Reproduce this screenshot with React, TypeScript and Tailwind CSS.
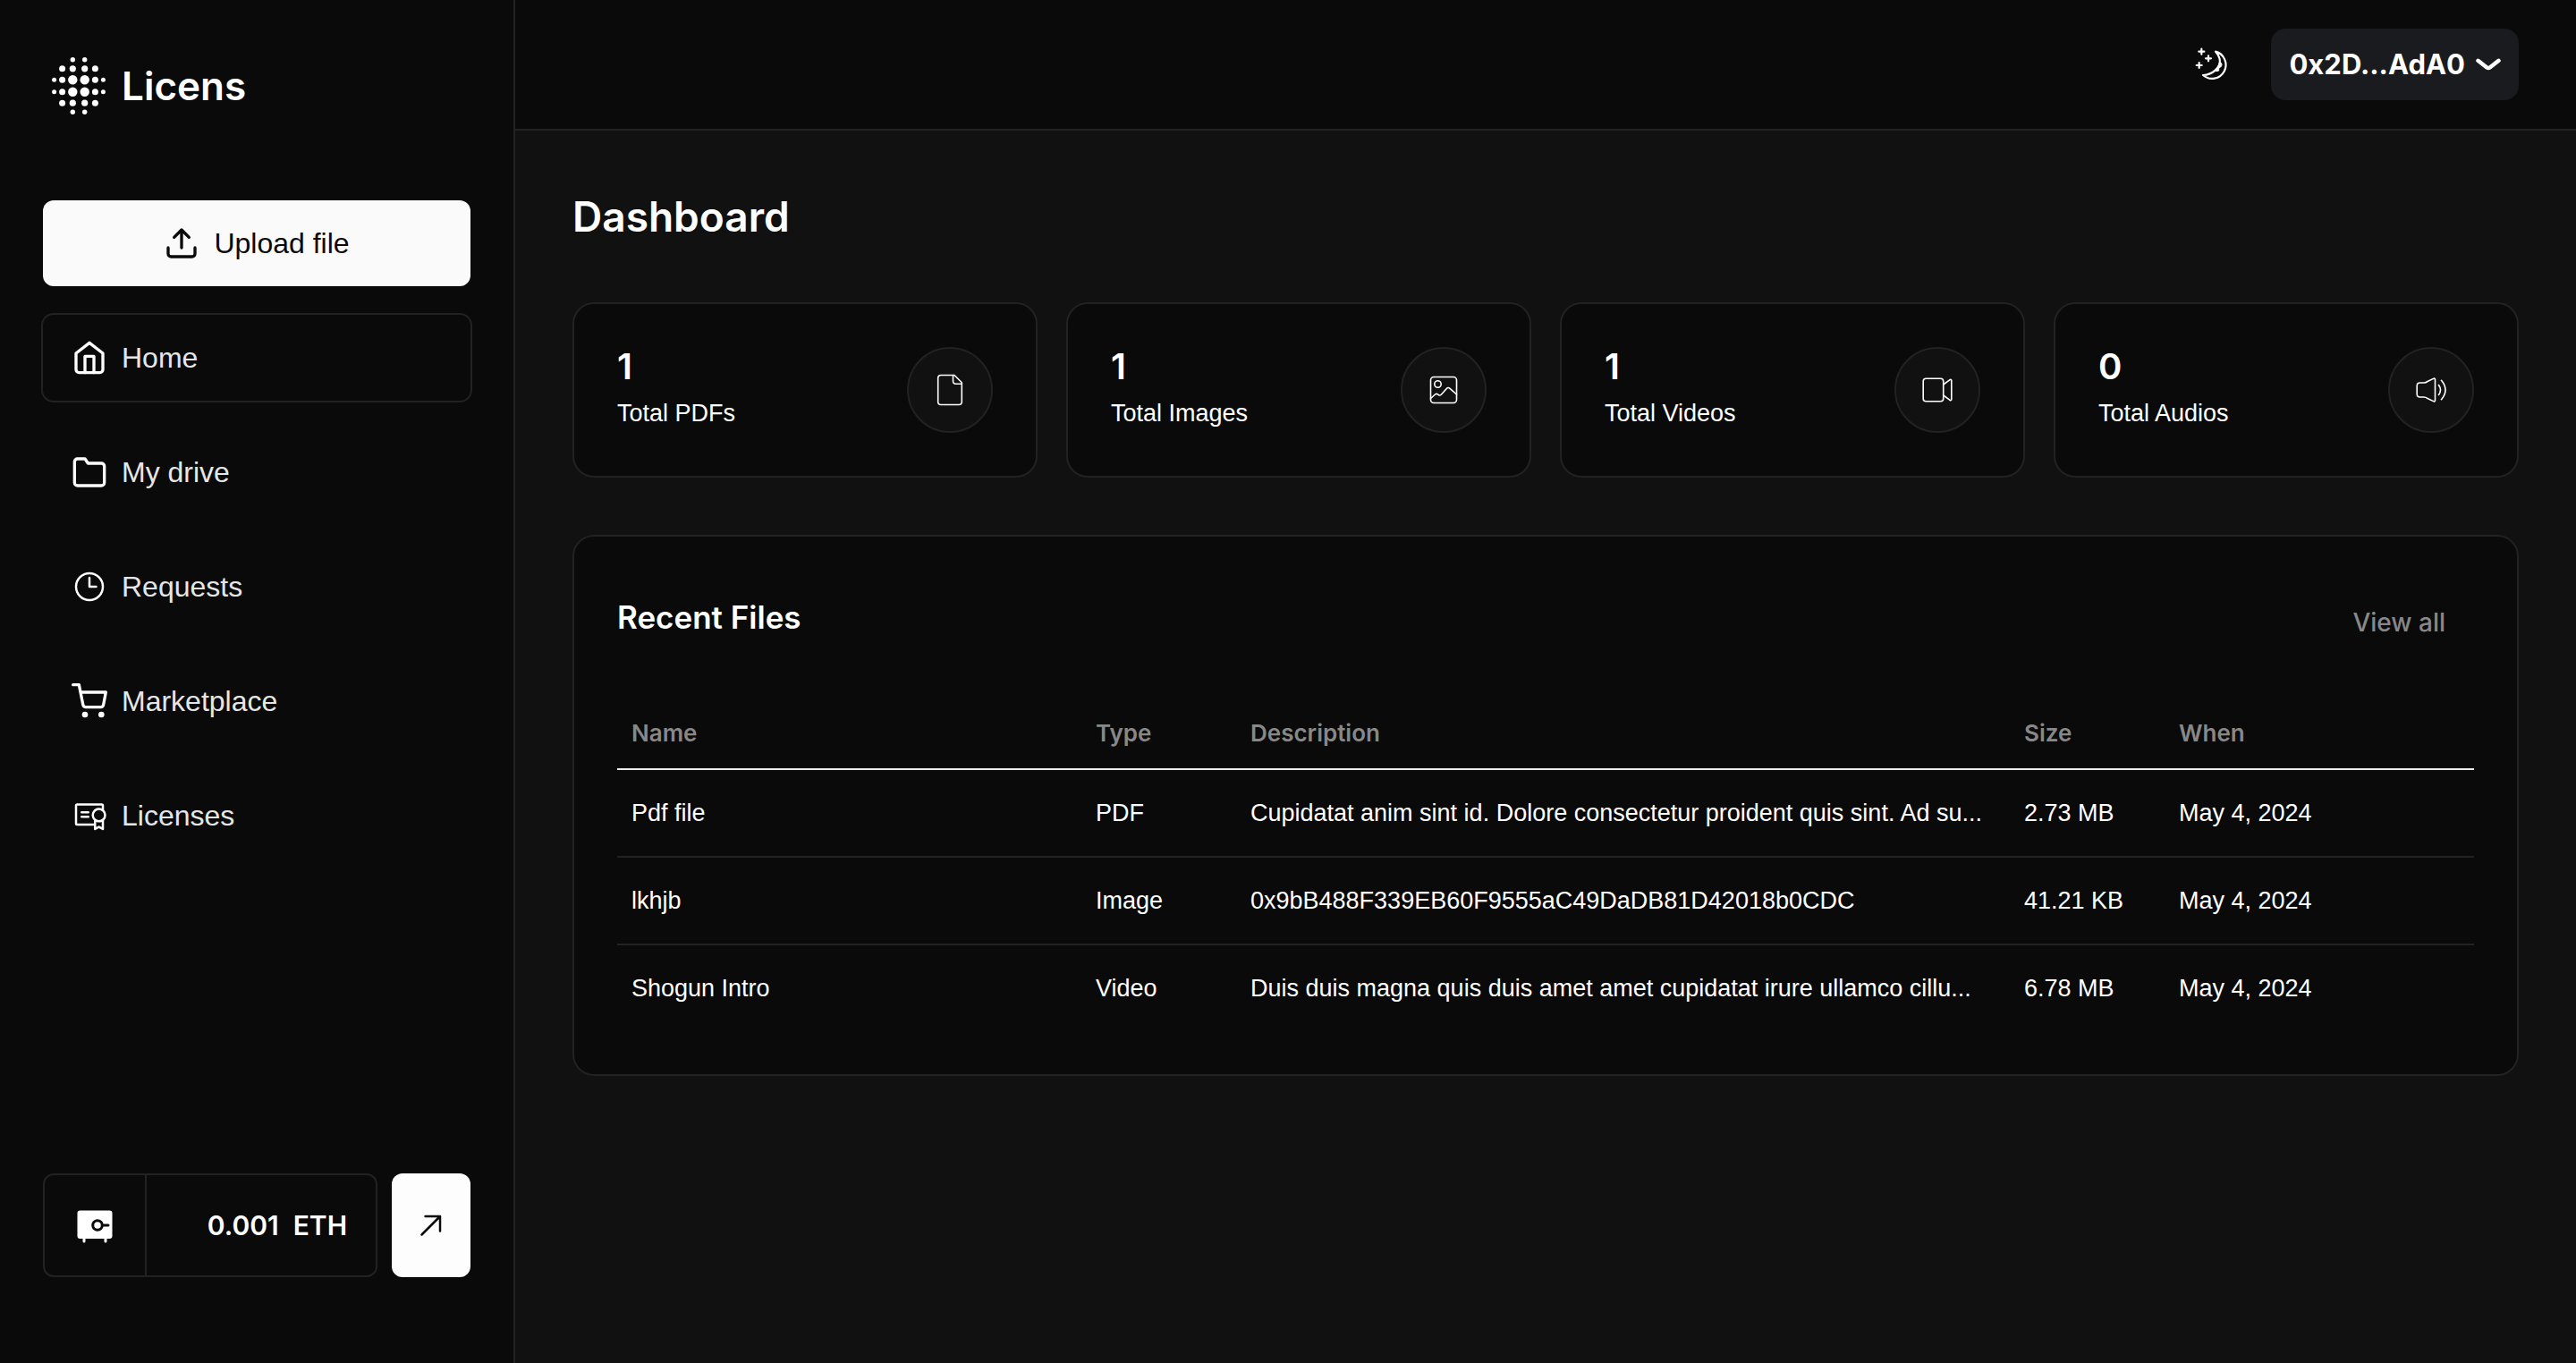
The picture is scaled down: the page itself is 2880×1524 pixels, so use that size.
import React, { type ReactNode } from "react";
import { PiCertificate, PiVaultFill } from "react-icons/pi";

const FeatherIcon = ({ children }: { children: ReactNode }) => (
  <svg
    viewBox="0 0 24 24"
    className="size-10 shrink-0"
    fill="none"
    stroke="currentColor"
    strokeWidth="2"
    strokeLinecap="round"
    strokeLinejoin="round"
    overflow="visible"
    aria-hidden="true"
  >
    {children}
  </svg>
);

const ThinIcon = ({ children }: { children: ReactNode }) => (
  <svg
    viewBox="0 0 40 40"
    className="size-10"
    fill="none"
    stroke="currentColor"
    strokeWidth="1.6"
    strokeLinecap="round"
    strokeLinejoin="round"
    aria-hidden="true"
  >
    {children}
  </svg>
);

const LOGO_DOTS: [number, number, number][] = [
  [6.7, 6.7, 5.2],
  [18.4, 6.7, 3.5],
  [27.4, 6.7, 2.5],
  [6.7, 19.2, 3.6],
  [18.4, 19.2, 3.5],
  [6.7, 29.2, 2.7],
];

const LogoMark = () => (
  <svg viewBox="-40 -32 80 64" className="h-16 w-20" fill="white" aria-hidden="true">
    {LOGO_DOTS.flatMap(([x, y, r]) =>
      [
        [1, 1],
        [1, -1],
        [-1, 1],
        [-1, -1],
      ].map(([sx, sy]) => <circle key={`${x}${y}${sx}${sy}`} cx={x * sx} cy={y * sy} r={r} />)
    )}
  </svg>
);

const MoonIcon = () => (
  <svg
    viewBox="0 -3 168 162"
    className="h-[54px] w-14"
    fill="none"
    stroke="white"
    strokeWidth="6.5"
    strokeLinecap="round"
    strokeLinejoin="round"
    aria-hidden="true"
  >
    <path d="M43 26v18M34 35h18M66 49v18M57 58h18M35 72v18M26 81h18" />
    <path d="M90 35A46 46 0 1 1 48 114C66 113 80 106 90 97C101 86 107 74 104 60C102 50 97 42 90 35Z" />
    <path fill="white" strokeWidth="3" d="M105 70C112 73 113 82 107 87L101 90L101 99L93 101L87 97L98 86Z" />
  </svg>
);

const NAV = [
  {
    label: "Home",
    active: true,
    icon: (
      <FeatherIcon>
        <path d="M3 9l9-7 9 7v11a2 2 0 0 1-2 2H5a2 2 0 0 1-2-2z" />
        <path d="M9 22V11h6v11" />
      </FeatherIcon>
    ),
  },
  {
    label: "My drive",
    icon: (
      <FeatherIcon>
        <path d="M22 19a2 2 0 0 1-2 2H4a2 2 0 0 1-2-2V5a2 2 0 0 1 2-2h5l2 3h9a2 2 0 0 1 2 2z" />
      </FeatherIcon>
    ),
  },
  {
    label: "Requests",
    icon: (
      <FeatherIcon>
        <path strokeWidth="1.5" d="M12 6v6h4.5m4.5 0a9 9 0 1 1-18 0 9 9 0 0 1 18 0Z" />
      </FeatherIcon>
    ),
  },
  {
    label: "Marketplace",
    icon: (
      <FeatherIcon>
        <circle cx="9" cy="21" r="1" />
        <circle cx="20" cy="21" r="1" />
        <path d="M1 1h4l2.68 13.39a2 2 0 0 0 2 1.61h9.72a2 2 0 0 0 2-1.61L23 6H6" />
      </FeatherIcon>
    ),
  },
  { label: "Licenses", icon: <PiCertificate className="size-10 shrink-0" aria-hidden="true" /> },
];

const STATS = [
  {
    value: 1,
    label: "Total PDFs",
    icon: (
      <ThinIcon>
        <path d="M25 3.5H10A3.3 3.3 0 0 0 6.7 6.8V33.2A3.3 3.3 0 0 0 10 36.5H30A3.3 3.3 0 0 0 33.3 33.2V11.8Z" />
        <path d="M23.5 3.5V10A3.3 3.3 0 0 0 26.8 13.3H33.3" />
      </ThinIcon>
    ),
  },
  {
    value: 1,
    label: "Total Images",
    icon: (
      <ThinIcon>
        <rect x="5.5" y="5.5" width="29" height="29" rx="3.5" />
        <circle cx="13.5" cy="13.5" r="3.7" />
        <path d="M5.5 29.5L10.5 25Q12 23.7 13.5 25L14.5 25.7Q16 26.5 17.5 25L23.3 18.5Q25 16.5 27 18.3L34.5 25" />
      </ThinIcon>
    ),
  },
  {
    value: 1,
    label: "Total Videos",
    icon: (
      <ThinIcon>
        <rect x="4.2" y="7.3" width="22.5" height="25.4" rx="3" />
        <path d="M26.7 14L33.7 8.8Q35.8 7.6 35.8 9.8V30.2Q35.8 32.4 33.7 31.2L26.7 26" />
      </ThinIcon>
    ),
  },
  {
    value: 0,
    label: "Total Audios",
    icon: (
      <ThinIcon>
        <path d="M4.2 15.5Q4.2 12 7.5 12H12Q14 12 16 10.5L22.5 7.4Q24.5 6.6 24.5 8.5V31.5Q24.5 33.4 22.5 32.6L16 29.5Q14 28 12 28H7.5Q4.2 28 4.2 24.5Z" />
        <path d="M28.5 14.5Q32.5 20 28.5 25.5M31.5 9.3Q40.5 20 31.5 30.7" />
      </ThinIcon>
    ),
  },
];

const FILES = [
  {
    name: "Pdf file",
    type: "PDF",
    description: "Cupidatat anim sint id. Dolore consectetur proident quis sint. Ad su...",
    size: "2.73 MB",
    when: "May 4, 2024",
  },
  {
    name: "lkhjb",
    type: "Image",
    description: "0x9bB488F339EB60F9555aC49DaDB81D42018b0CDC",
    size: "41.21 KB",
    when: "May 4, 2024",
  },
  {
    name: "Shogun Intro",
    type: "Video",
    description: "Duis duis magna quis duis amet amet cupidatat irure ullamco cillu...",
    size: "6.78 MB",
    when: "May 4, 2024",
  },
];

const COLUMNS = [
  { label: "Name", width: "w-3/12" },
  { label: "Type", width: "w-1/12" },
  { label: "Description", width: "w-5/12" },
  { label: "Size", width: "w-1/12" },
  { label: "When", width: "w-2/12" },
];

function Sidebar() {
  return (
    <aside className="flex w-[576px] shrink-0 flex-col border-r-2 border-[#222222] bg-[#0a0a0a] px-12 pt-16 pb-24">
      <a href="#" className="mb-24 flex items-center gap-2">
        <LogoMark />
        <span className="font-['Inter',sans-serif] text-[44px] leading-16 font-semibold">Licens</span>
      </a>
      <button
        type="button"
        className="mb-8 flex h-24 items-center justify-center gap-4 rounded-xl bg-[#fafafa] text-[32px] text-[#0a0a0a]"
      >
        <FeatherIcon>
          <path d="M21 15v4a2 2 0 0 1-2 2H5a2 2 0 0 1-2-2v-4M17 8l-5-5-5 5M12 3v12" />
        </FeatherIcon>
        Upload file
      </button>
      <nav className="flex flex-col gap-8">
        {NAV.map((item) => (
          <a
            key={item.label}
            href="#"
            aria-current={item.active ? "page" : undefined}
            className={
              item.active
                ? "flex h-24 items-center gap-4 rounded-xl px-8 ring-2 ring-[#222222]"
                : "flex h-24 items-center gap-4 rounded-xl px-8"
            }
          >
            {item.icon}
            <span className="text-[32px] text-[#e6e6e6]">{item.label}</span>
          </a>
        ))}
      </nav>
      <div className="mt-auto flex h-[116px] gap-4">
        <div className="flex flex-1 rounded-xl border-2 border-[#222222]">
          <div className="flex w-[114px] items-center justify-center border-r-2 border-[#222222]">
            <PiVaultFill className="size-12" aria-hidden="true" />
          </div>
          <div className="flex flex-1 items-center justify-end gap-4 pr-8 font-['Inter',sans-serif] text-[30px] font-semibold">
            <span>0.001</span>
            <span>ETH</span>
          </div>
        </div>
        <button
          type="button"
          aria-label="Open wallet"
          className="flex w-[88px] items-center justify-center rounded-xl bg-[#fdfdfd] text-[#0a0a0a]"
        >
          <svg
            viewBox="0 0 32 32"
            className="size-8"
            fill="none"
            stroke="currentColor"
            strokeWidth="2.5"
            strokeLinecap="round"
            strokeLinejoin="round"
            aria-hidden="true"
          >
            <path d="M5.5 26.5L26 6M9.5 6H26V22.5" />
          </svg>
        </button>
      </div>
    </aside>
  );
}

function Header() {
  return (
    <header className="flex h-[146px] items-center justify-end gap-9 border-b-2 border-[#222222] bg-[#0a0a0a] px-16">
      <button type="button" aria-label="Toggle theme">
        <MoonIcon />
      </button>
      <button
        type="button"
        className="flex h-20 items-center gap-3 rounded-2xl bg-[#1a1b1f] px-5 font-['Inter',sans-serif] text-[31px] font-bold"
      >
        0x2D...AdA0
        <svg
          viewBox="0 0 28 14"
          className="h-3.5 w-7"
          fill="none"
          stroke="currentColor"
          strokeWidth="4.5"
          strokeLinecap="round"
          strokeLinejoin="round"
          aria-hidden="true"
        >
          <path d="M2.5 2.8L12 10.2Q14 11.7 16 10.2L25.5 2.8" />
        </svg>
      </button>
    </header>
  );
}

function RecentFiles() {
  return (
    <section className="mt-16 rounded-3xl border-2 border-[#222222] bg-[#0a0a0a] p-12">
      <div className="mb-12 flex h-[84px] items-center justify-between">
        <h2 className="font-['Inter',sans-serif] text-[35px] font-semibold">Recent Files</h2>
        <a href="#" className="mt-3 px-8 font-['Inter',sans-serif] text-[28px] font-medium text-[#888888]">
          View all
        </a>
      </div>
      <table className="w-full table-fixed border-separate border-spacing-0 text-left text-[27px] whitespace-nowrap">
        <thead>
          <tr>
            {COLUMNS.map((column) => (
              <th
                key={column.label}
                scope="col"
                className={`${column.width} h-[81px] border-b-2 border-[#ececec] px-4 font-['Inter',sans-serif] text-[26px] font-semibold text-[#888888]`}
              >
                {column.label}
              </th>
            ))}
          </tr>
        </thead>
        <tbody className="[&>tr:last-child>td]:h-24 [&>tr:last-child>td]:border-b-0">
          {FILES.map((file) => (
            <tr key={file.name}>
              {[file.name, file.type, file.description, file.size, file.when].map((cell, i) => (
                <td key={i} className="h-[98px] border-b-2 border-[#222222] px-4">
                  {cell}
                </td>
              ))}
            </tr>
          ))}
        </tbody>
      </table>
    </section>
  );
}

export default function App() {
  return (
    <div className="flex min-h-screen bg-[#111111] font-['Liberation_Sans',Arial,sans-serif] text-white">
      <Sidebar />
      <div className="min-w-0 flex-1">
        <Header />
        <main className="p-16">
          <h1 className="mb-16 font-['Inter',sans-serif] text-[46px] leading-16 font-semibold">Dashboard</h1>
          <div className="grid grid-cols-4 gap-8">
            {STATS.map((stat) => (
              <div
                key={stat.label}
                className="flex items-center justify-between rounded-3xl border-2 border-[#222222] bg-[#0a0a0a] p-12"
              >
                <div className="flex flex-col gap-2">
                  <span className="font-['Inter',sans-serif] text-[40px] leading-11 font-semibold">{stat.value}</span>
                  <span className="text-[27px] leading-11">{stat.label}</span>
                </div>
                <div className="flex size-24 items-center justify-center rounded-full border-2 border-[#222222] bg-[#111111]">
                  {stat.icon}
                </div>
              </div>
            ))}
          </div>
          <RecentFiles />
        </main>
      </div>
    </div>
  );
}
